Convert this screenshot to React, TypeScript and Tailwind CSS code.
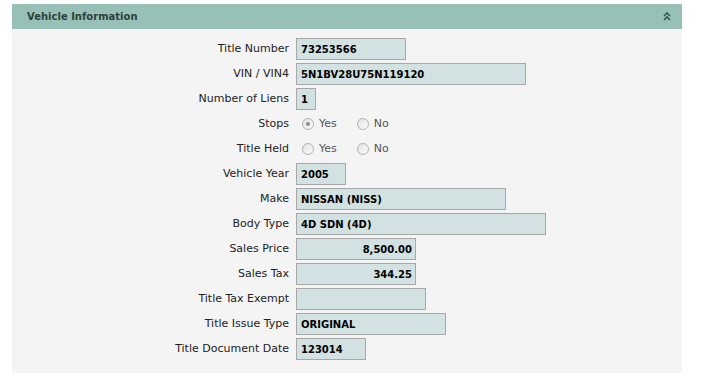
const fields: { label: string; value?: string; width?: number; right?: boolean; radio?: boolean; checked?: "yes" | "no" | null }[] = [
  { label: "Title Number", value: "73253566", width: 110 },
  { label: "VIN / VIN4", value: "5N1BV28U75N119120", width: 230 },
  { label: "Number of Liens", value: "1", width: 20 },
  { label: "Stops", radio: true, checked: "yes" },
  { label: "Title Held", radio: true, checked: null },
  { label: "Vehicle Year", value: "2005", width: 50 },
  { label: "Make", value: "NISSAN (NISS)", width: 210 },
  { label: "Body Type", value: "4D SDN (4D)", width: 250 },
  { label: "Sales Price", value: "8,500.00", width: 120, right: true },
  { label: "Sales Tax", value: "344.25", width: 120, right: true },
  { label: "Title Tax Exempt", value: "", width: 130 },
  { label: "Title Issue Type", value: "ORIGINAL", width: 150 },
  { label: "Title Document Date", value: "123014", width: 70 },
];

function Radio({ checked, label }: { checked: boolean; label: string }) {
  return (
    <span className="flex items-center">
      <span className="w-[12px] h-[12px] rounded-full border border-[#b4b4b4] bg-gradient-to-br from-[#e2e2e2] to-[#fbfbfb] flex items-center justify-center">
        {checked && <span className="w-[4px] h-[4px] rounded-full bg-[#8a8a8a]" />}
      </span>
      <span className="ml-[5px] text-[#555]">{label}</span>
    </span>
  );
}

export default function App() {
  return (
    <div className="w-[701px] h-[383px] bg-white pt-[4px] pl-[12px]" style={{ fontFamily: "'DejaVu Sans', sans-serif" }}>
      <div className="w-[670px]">
        <div className="h-[25px] bg-[#97c1b7] flex items-center justify-between pl-[15px] pr-[11px]">
          <span className="text-[10px] font-bold text-[#2f3f3b]">Vehicle Information</span>
          <svg width="8" height="9" viewBox="0 0 8 9" fill="none" stroke="#2f5a4e" strokeWidth="1.6">
            <path d="M1 4 L4 1 L7 4" />
            <path d="M1 8 L4 5 L7 8" />
          </svg>
        </div>
        <div className="bg-[#f4f4f4] pt-[9px] pb-[13px]">
          <div className="grid grid-cols-[277px_1fr] gap-x-[7px] gap-y-[3px]">
            {fields.map((f) => (
              <div key={f.label} className="contents">
                <div className="h-[22px] flex items-center justify-end text-[11px] text-[#222]">{f.label}</div>
                {f.radio ? (
                  <div className="h-[22px] flex items-center pl-[6px] text-[11px] gap-[20px]">
                    <Radio checked={f.checked === "yes"} label="Yes" />
                    <Radio checked={f.checked === "no"} label="No" />
                  </div>
                ) : (
                  <div
                    className={`h-[22px] border border-[#a8a8a8] bg-[#d2e1e1] flex items-center text-[10px] font-bold text-black ${f.right ? "justify-end pr-[3px]" : "pl-[4px]"}`}
                    style={{ width: f.width }}
                  >
                    {f.value}
                  </div>
                )}
              </div>
            ))}
          </div>
        </div>
      </div>
    </div>
  );
}
